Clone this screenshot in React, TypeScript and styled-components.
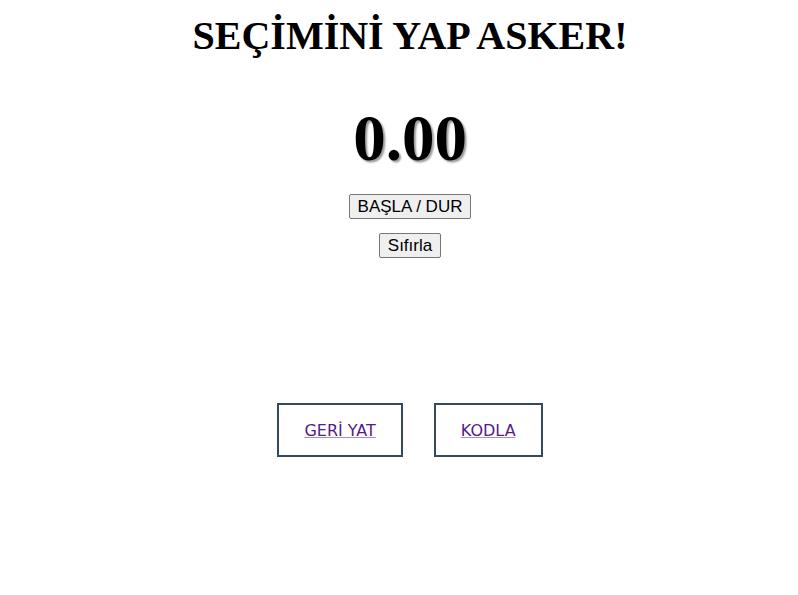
import React from "react";
import styled, { createGlobalStyle } from "styled-components";

const Global = createGlobalStyle`
  html, body { margin: 0; padding: 0; background: #ffffff; }
  body { font-family: "Liberation Serif", "Times New Roman", serif; }
`;

const Page = styled.main`
  display: flex;
  flex-direction: column;
  align-items: center;
  padding-top: 13px;
  padding-left: 22px;
`;

const Title = styled.h1`
  margin: 0;
  font-size: 40px;
  font-weight: bold;
  line-height: 46px;
  color: #000;
`;

const Timer = styled.div`
  margin-top: 42px;
  font-size: 65px;
  font-weight: bold;
  line-height: 75px;
  color: #000;
  text-shadow: 2px 2px 2px #9a9a9a;
`;

const Controls = styled.div`
  margin-top: 18px;
  display: flex;
  flex-direction: column;
  align-items: center;
  gap: 14px;
`;

const Button = styled.button`
  font-family: "Liberation Sans", Arial, sans-serif;
  font-size: 17px;
  line-height: 19px;
  padding: 1px 8px;
  height: 25px;
  color: #000;
  background: #efefef;
  border: 1px solid #767676;
  border-radius: 2px;
`;

const Links = styled.nav`
  margin-top: 145px;
  display: flex;
  gap: 31px;
`;

const LinkBox = styled.a`
  display: flex;
  align-items: center;
  justify-content: center;
  box-sizing: border-box;
  height: 54px;
  padding: 0 25px;
  border: 2px solid #34495e;
  font-family: "DejaVu Sans", Tahoma, sans-serif;
  font-size: 16px;
  color: #551a8b;
  text-decoration: underline;
  text-decoration-color: #a98bc8;
`;

export default function App() {
  return (
    <>
      <Global />
      <Page>
        <Title>SEÇİMİNİ YAP ASKER!</Title>
        <Timer>0.00</Timer>
        <Controls>
          <Button>BAŞLA / DUR</Button>
          <Button>Sıfırla</Button>
        </Controls>
        <Links>
          <LinkBox href="#geri">GERİ YAT</LinkBox>
          <LinkBox href="#kodla">KODLA</LinkBox>
        </Links>
      </Page>
    </>
  );
}
